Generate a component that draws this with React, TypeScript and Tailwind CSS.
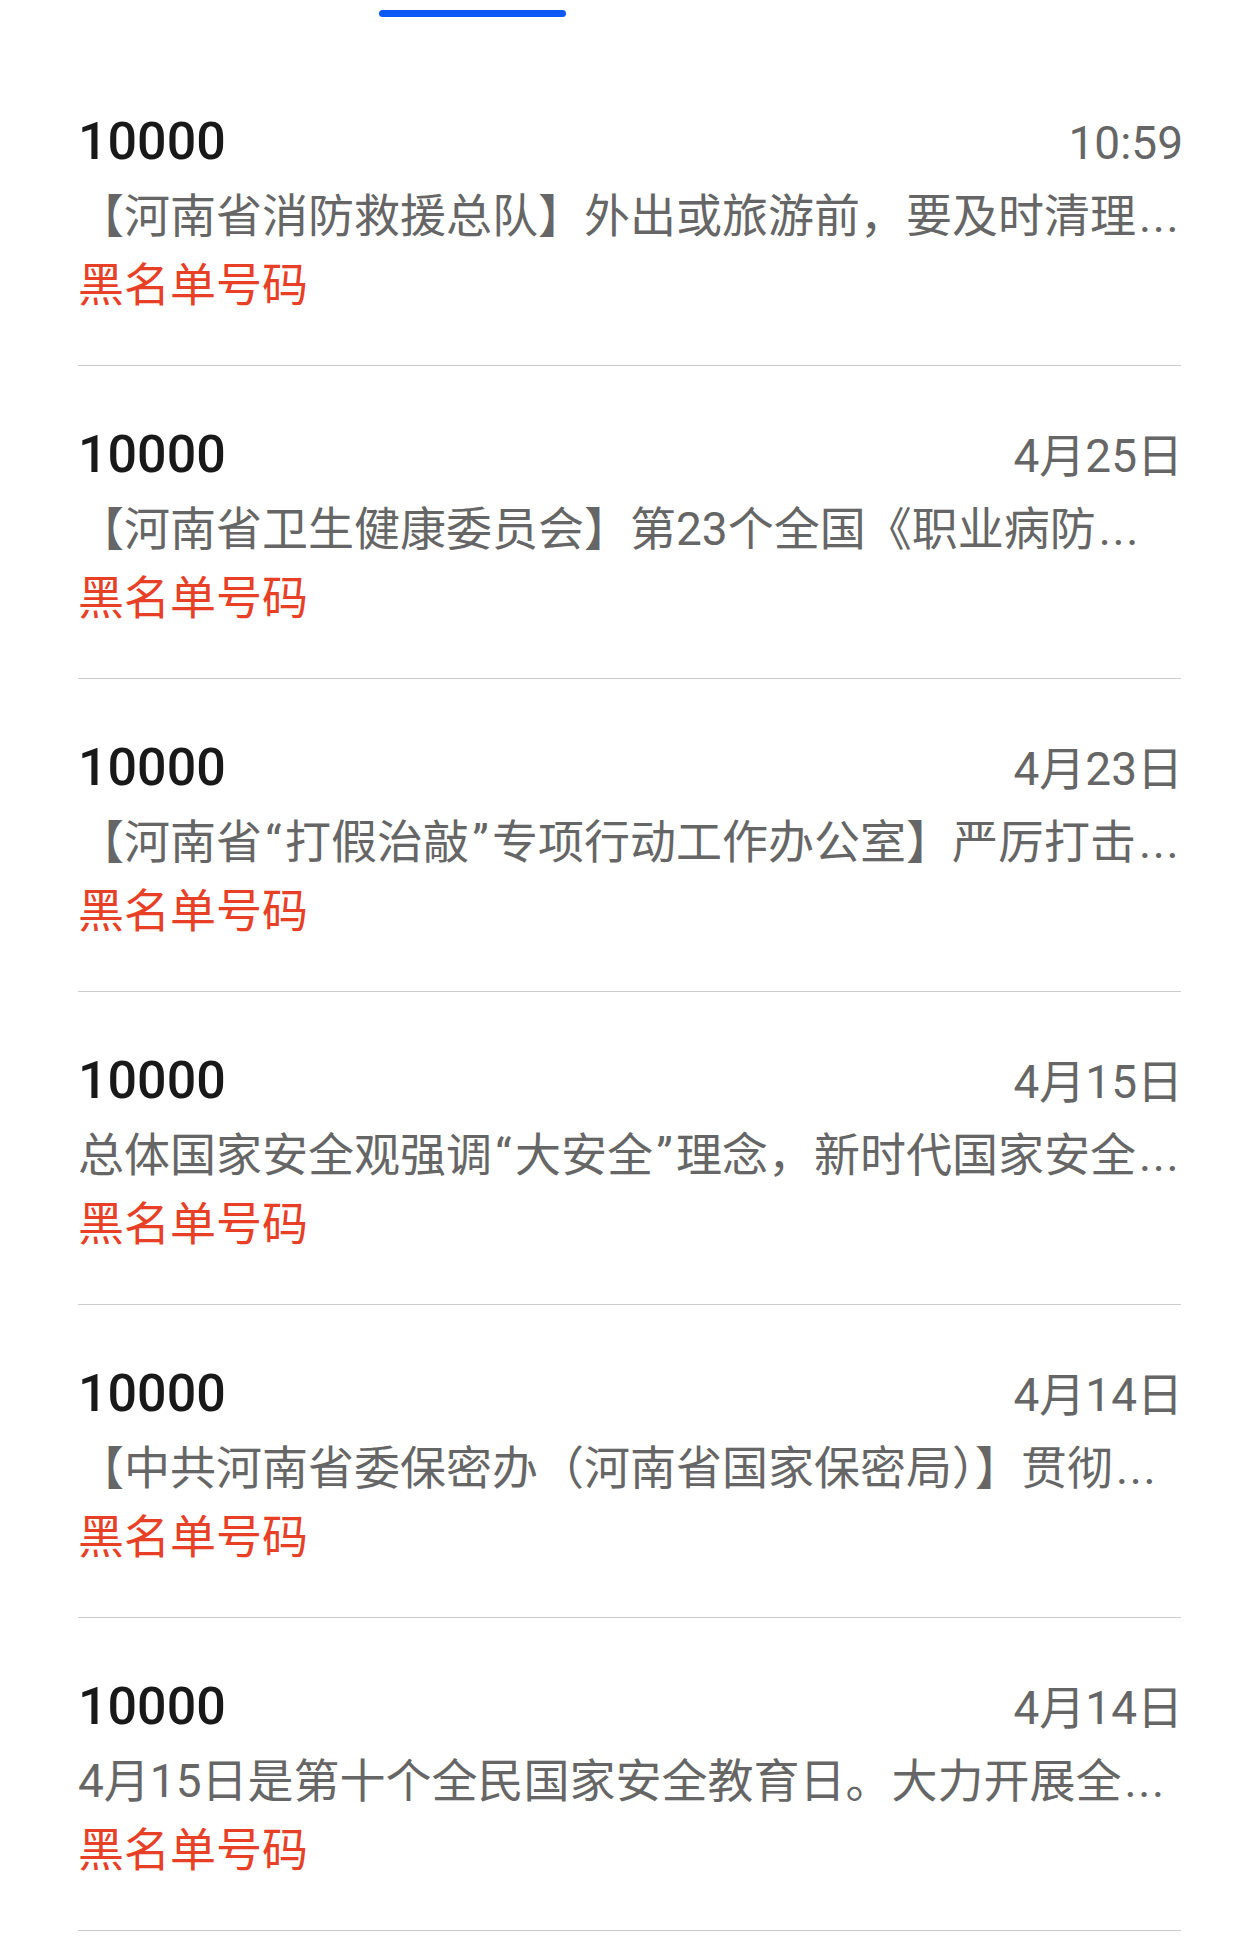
import React from "react";

type Msg = { date: string; text: React.ReactNode };

const Q = ({ c }: { c: string }) => (
  <span className="inline-block w-[23px] text-center">{c}</span>
);

const E = () => <span className="tracking-[1.6px] ml-[3px]">...</span>;

const messages: Msg[] = [
  { date: "10:59", text: <>【河南省消防救援总队】外出或旅游前，要及时清理<E /></> },
  { date: "4月25日", text: <>【河南省卫生健康委员会】第23个全国《职业病防<E /></> },
  {
    date: "4月23日",
    text: (
      <>
        【河南省<Q c="“" />打假治敲<Q c="”" />专项行动工作办公室】严厉打击<E />
      </>
    ),
  },
  {
    date: "4月15日",
    text: (
      <>
        总体国家安全观强调<Q c="“" />大安全<Q c="”" />理念，新时代国家安全<E />
      </>
    ),
  },
  { date: "4月14日", text: <>【中共河南省委保密办（河南省国家保密局）】贯彻<E /></> },
  { date: "4月14日", text: <>4月15日是第十个全民国家安全教育日。大力开展全<E /></> },
];

export default function App() {
  return (
    <div className="w-[1259px] h-[1953px] bg-white font-['Roboto','Noto_Sans_CJK_SC',sans-serif] overflow-hidden">
      <div className="h-[53px] pl-[379px] pt-[10px]">
        <div className="w-[187px] h-[7px] rounded-full bg-[#0A59F7]" />
      </div>
      <div className="px-[78px]">
        {messages.map((m, i) => (
          <div key={i} className="border-b border-[#cccccc] pt-[49px] pb-[45px]">
            <div className="flex items-baseline justify-between h-[80px] leading-[80px]">
              <span className="text-[52px] font-medium text-[#191919]">10000</span>
              <span className="text-[46px] text-[#666666] mr-[-2px]">{m.date}</span>
            </div>
            <div className="h-[69px] leading-[69px] text-[46px] text-[#666666] whitespace-nowrap overflow-hidden">
              {m.text}
            </div>
            <div className="h-[69px] leading-[69px] text-[46px] text-[#E84026]">黑名单号码</div>
          </div>
        ))}
      </div>
    </div>
  );
}
